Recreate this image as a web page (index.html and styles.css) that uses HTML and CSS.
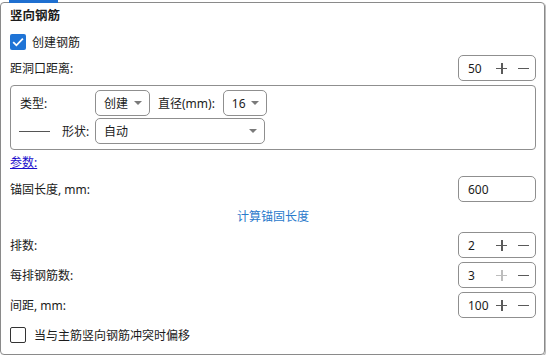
FILE: index.html
```html
<!DOCTYPE html>
<html lang="zh">
<head>
  <meta charset="UTF-8" />
  <title>竖向钢筋</title>
  <link rel="stylesheet" href="styles.css">
</head>
<body>
  <div class="panel">
    <div class="tab-mark"></div>
    <div class="title">竖向钢筋</div>

    <div class="check-row">
      <span class="box checked">
        <svg width="16" height="16" viewBox="0 0 16 16"><path d="M3.2 8.2 L6.4 11.3 L12.9 4.6" fill="none" stroke="#fff" stroke-width="1.8"/></svg>
      </span>
      <span>创建钢筋</span>
    </div>

    <div class="field-row">
      <span>距洞口距离:</span>
      <div class="spin"><span class="val">50</span><span class="plus"></span><span class="minus"></span></div>
    </div>

    <div class="group">
      <div class="grow">
        <span class="glabel">类型:</span>
        <div class="select sel-type"><span>创建</span><i class="caret"></i></div>
        <span class="dia">直径(mm):</span>
        <div class="select sel-dia"><span>16</span><i class="caret"></i></div>
      </div>
      <div class="grow">
        <span class="glabel"><i class="line"></i>形状:</span>
        <div class="select sel-shape"><span>自动</span><i class="caret"></i></div>
      </div>
    </div>

    <div class="link-row"><a href="#">参数:</a></div>

    <div class="field-row">
      <span>锚固长度, mm:</span>
      <div class="input">600</div>
    </div>

    <div class="calc-row"><span>计算锚固长度</span></div>

    <div class="spin-row">
      <span>排数:</span>
      <div class="spin"><span class="val">2</span><span class="plus"></span><span class="minus"></span></div>
    </div>
    <div class="spin-row">
      <span>每排钢筋数:</span>
      <div class="spin"><span class="val">3</span><span class="plus off"></span><span class="minus"></span></div>
    </div>
    <div class="spin-row">
      <span>间距, mm:</span>
      <div class="spin"><span class="val">100</span><span class="plus"></span><span class="minus"></span></div>
    </div>

    <div class="check-row bottom">
      <span class="box"></span>
      <span>当与主筋竖向钢筋冲突时偏移</span>
    </div>
  </div>
</body>
</html>
```

FILE: styles.css
```css
body {
  margin: 0;
  background: #fff;
  font-family: "Noto Sans", "Noto Sans CJK SC", sans-serif;
  font-size: 12px;
  color: #1b1b1b;
}
.panel {
  position: relative;
  margin-top: 2px;
  width: 545px;
  height: 353px;
  border: 1px solid #8a8a8a;
  border-radius: 4px;
  box-shadow: 1px 1px 0 #bdbdbd;
  padding: 0 8px 0 9px;
  box-sizing: border-box;
}
.tab-mark {
  position: absolute;
  left: 8px;
  top: -3px;
  width: 49px;
  height: 3px;
  background: #1e6fd0;
}
.title {
  height: 26px;
  line-height: 26px;
  font-size: 12.5px;
  font-weight: 600;
}
.check-row {
  height: 26px;
  display: flex;
  align-items: center;
  gap: 6px;
}
.check-row.bottom {
  height: 30px;
  gap: 8px;
}
.box {
  width: 16px;
  height: 16px;
  box-sizing: border-box;
  border: 1px solid #333;
  border-radius: 2px;
  background: #fff;
}
.box.checked {
  border: none;
  background: #1f74d6;
}
.box svg {
  display: block;
}
.field-row {
  height: 26px;
  display: flex;
  align-items: center;
  justify-content: space-between;
}
.field-row:first-of-type {
  margin-top: 1px;
}
.spin-row {
  height: 30px;
  display: flex;
  align-items: center;
  justify-content: space-between;
}
.spin, .input {
  flex-shrink: 0;
  width: 78px;
  height: 26px;
  box-sizing: border-box;
  border: 1px solid #8f8f8f;
  border-radius: 5px;
  display: flex;
  align-items: center;
  padding: 0 6px 0 9px;
}
.spin .val {
  flex: 1;
}
.plus, .minus {
  position: relative;
  flex-shrink: 0;
  width: 11px;
  height: 11px;
}
.minus {
  margin-left: 11px;
}
.plus::before, .minus::before {
  content: "";
  position: absolute;
  left: 0;
  top: 5px;
  width: 11px;
  height: 1.5px;
  background: #5a5a5a;
}
.plus::after {
  content: "";
  position: absolute;
  left: 5px;
  top: 0;
  width: 1.5px;
  height: 11px;
  background: #5a5a5a;
}
.plus.off::before, .plus.off::after {
  background: #bdbdbd;
}
.group {
  margin-top: 4px;
  height: 65px;
  box-sizing: border-box;
  border: 1px solid #8f8f8f;
  border-radius: 4px;
  padding: 4px 9px 0 9px;
  display: flex;
  flex-direction: column;
  gap: 2px;
}
.grow {
  display: flex;
  align-items: center;
}
.glabel {
  width: 75px;
  display: flex;
  align-items: center;
}
.line {
  width: 31px;
  height: 1px;
  background: #555;
  margin: 0 12px 0 -1px;
}
.select {
  height: 26px;
  box-sizing: border-box;
  border: 1px solid #8f8f8f;
  border-radius: 5px;
  display: flex;
  align-items: center;
  justify-content: space-between;
  padding: 0 7px 0 8px;
}
.sel-type { width: 55px; }
.sel-dia { width: 44px; }
.sel-shape { width: 170px; }
.dia {
  margin: 0 8px;
}
.caret {
  width: 0;
  height: 0;
  border-left: 4px solid transparent;
  border-right: 4px solid transparent;
  border-top: 4px solid #7a7a7a;
}
.link-row {
  height: 26px;
  line-height: 26px;
}
.link-row a {
  color: #1a0dcc;
  text-decoration: underline;
}
.calc-row {
  height: 28px;
  display: flex;
  align-items: center;
  justify-content: center;
  color: #2a7acb;
}
```
